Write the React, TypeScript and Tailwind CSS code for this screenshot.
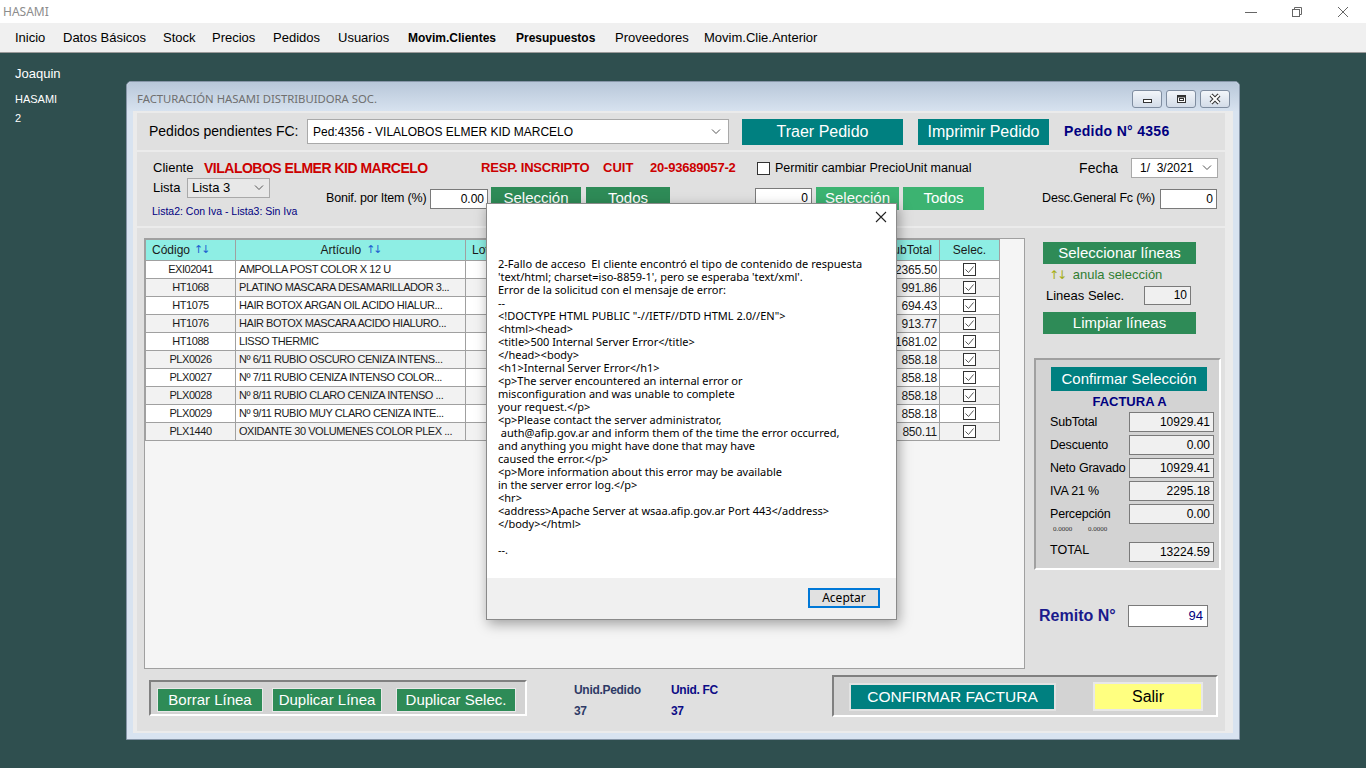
import React from 'react';

// --- data ---

const menuItems = [
  { label: 'Inicio', w: 'w-[48px]' },
  { label: 'Datos Básicos', w: 'w-[100px]' },
  { label: 'Stock', w: 'w-[49px]' },
  { label: 'Precios', w: 'w-[61px]' },
  { label: 'Pedidos', w: 'w-[65px]' },
  { label: 'Usuarios', w: 'w-[70px]' },
  { label: 'Movim.Clientes', w: 'w-[108px]', bold: true },
  { label: 'Presupuestos', w: 'w-[99px]', bold: true },
  { label: 'Proveedores', w: 'w-[89px]' },
  { label: 'Movim.Clie.Anterior', w: 'w-[120px]' },
];

const rows = [
  ['EXI02041', 'AMPOLLA POST COLOR X 12 U', '2365.50'],
  ['HT1068', 'PLATINO MASCARA DESAMARILLADOR 3...', '991.86'],
  ['HT1075', 'HAIR BOTOX ARGAN OIL ACIDO HIALUR...', '694.43'],
  ['HT1076', 'HAIR BOTOX MASCARA ACIDO HIALURO...', '913.77'],
  ['HT1088', 'LISSO THERMIC', '1681.02'],
  ['PLX0026', 'Nº 6/11 RUBIO OSCURO CENIZA INTENS...', '858.18'],
  ['PLX0027', 'Nº 7/11 RUBIO CENIZA INTENSO COLOR...', '858.18'],
  ['PLX0028', 'Nº 8/11 RUBIO CLARO CENIZA INTENSO ...', '858.18'],
  ['PLX0029', 'Nº 9/11 RUBIO MUY CLARO CENIZA INTE...', '858.18'],
  ['PLX1440', 'OXIDANTE 30 VOLUMENES COLOR PLEX ...', '850.11'],
];

const totals = [
  ['SubTotal', '10929.41'],
  ['Descuento', '0.00'],
  ['Neto Gravado', '10929.41'],
  ['IVA 21 %', '2295.18'],
  ['Percepción', '0.00'],
];

const errorLines = [
  '2-Fallo de acceso  El cliente encontró el tipo de contenido de respuesta',
  "'text/html; charset=iso-8859-1', pero se esperaba 'text/xml'.",
  'Error de la solicitud con el mensaje de error:',
  '--',
  '<!DOCTYPE HTML PUBLIC "-//IETF//DTD HTML 2.0//EN">',
  '<html><head>',
  '<title>500 Internal Server Error</title>',
  '</head><body>',
  '<h1>Internal Server Error</h1>',
  '<p>The server encountered an internal error or',
  'misconfiguration and was unable to complete',
  'your request.</p>',
  '<p>Please contact the server administrator,',
  ' auth@afip.gov.ar and inform them of the time the error occurred,',
  'and anything you might have done that may have',
  'caused the error.</p>',
  '<p>More information about this error may be available',
  'in the server error log.</p>',
  '<hr>',
  '<address>Apache Server at wsaa.afip.gov.ar Port 443</address>',
  '</body></html>',
  ' ',
  '--.',
];

// --- small pieces ---

const Chevron = () => (
  <svg width="10" height="6" viewBox="0 0 10 6" fill="none" stroke="#555" strokeWidth="1">
    <path d="M1 0.5l4 4 4-4" />
  </svg>
);

const CheckBox = ({ checked }: { checked?: boolean }) => (
  <svg width="13" height="13" viewBox="0 0 13 13">
    <rect x="0.5" y="0.5" width="12" height="12" fill="white" stroke="#333" />
    {checked && <path d="M2.5 6.5l3 3 5-6" fill="none" stroke="#555" strokeWidth="1" />}
  </svg>
);

const Arrows = () => <span className="text-[#1d5fd0] text-[11px] tracking-[-2px] font-['DejaVu_Sans',sans-serif]">↑↓</span>;

function MdiButton({ kind }: { kind: 'min' | 'max' | 'close' }) {
  return (
    <div className="w-[30px] h-[18px] rounded-[3px] border border-[#7f8da0] bg-gradient-to-b from-[#f3f6fa] to-[#d3dce8] flex items-center justify-center">
      <svg width="14" height="12" viewBox="0 0 14 12">
        {kind === 'min' && <rect x="3.5" y="6.5" width="8" height="3" fill="white" stroke="#333" />}
        {kind === 'max' && (
          <>
            <rect x="3.5" y="2.5" width="8" height="7" fill="white" stroke="#333" />
            <rect x="3.5" y="2.5" width="8" height="2" fill="#333" />
            <rect x="5.5" y="5.5" width="4" height="2" fill="white" stroke="#333" />
          </>
        )}
        {kind === 'close' && (
          <>
            <path d="M3 2l8 8M11 2l-8 8" stroke="#333" strokeWidth="4" />
            <path d="M3 2l8 8M11 2l-8 8" stroke="white" strokeWidth="2" />
          </>
        )}
      </svg>
    </div>
  );
}

const GreenBtn = ({ children, className }: { children: React.ReactNode; className: string }) => (
  <div className={`flex items-center justify-center whitespace-nowrap text-white text-[15px] ${className}`}>{children}</div>
);

// --- main window ---

function Window() {
  return (
    <div className="absolute left-[126px] top-[28px] w-[1114px] h-[659px] rounded-t-[5px] border border-[#8796a8] bg-[#d8e3f0] flex flex-col">
      {/* title */}
      <div className="h-[29px] rounded-t-[5px] bg-gradient-to-b from-[#b8c7d9] to-[#d7e2ef] flex items-start">
        <span className="pl-[10px] mt-[9px] text-[11.3px] leading-[16px] text-[#6f6f6f] font-['Noto_Sans',sans-serif]">
          FACTURACIÓN HASAMI DISTRIBUIDORA SOC.
        </span>
        <div className="ml-auto mr-[9px] mt-[8px] flex gap-[4px]">
          <MdiButton kind="min" />
          <MdiButton kind="max" />
          <MdiButton kind="close" />
        </div>
      </div>

      {/* client area */}
      <div className="mx-[6px] h-[622px] bg-[#ebebeb] px-[4px] flex flex-col">
        {/* pedidos pendientes */}
        <div className="mt-[2px] w-[1088px] h-[37px] bg-[#e0e0e0] flex items-center">
          <span className="ml-[12px] w-[158px] text-[14px] whitespace-nowrap">Pedidos pendientes FC:</span>
          <div className="w-[422px] h-[25px] bg-white border border-[#a9a9a9] flex items-center pl-[5px] pr-[7px] text-[12px]">
            <span>Ped:4356 - VILALOBOS ELMER KID MARCELO</span>
            <span className="ml-auto"><Chevron /></span>
          </div>
          <div className="ml-[13px] w-[161px] h-[26px] bg-[#008080] text-white text-[16px] flex items-center justify-center">Traer Pedido</div>
          <div className="ml-[15px] w-[131px] h-[26px] bg-[#008080] text-white text-[16px] flex items-center justify-center">Imprimir Pedido</div>
          <span className="ml-[15px] text-[14px] font-bold text-[#000080] tracking-[0.3px]">Pedido N° 4356</span>
        </div>

        {/* cliente */}
        <div className="mt-[2px] w-[1088px] h-[74px] bg-[#e0e0e0] flex pt-[6px]">
          <div className="ml-[16px] w-[602px] flex flex-col">
            <div className="h-[20px] flex items-center whitespace-nowrap">
              <span className="w-[51px] text-[13px]">Cliente</span>
              <span className="w-[277px] text-[14px] font-bold text-[#cc0000] tracking-[-0.5px]">VILALOBOS ELMER KID MARCELO</span>
              <span className="w-[122px] text-[13px] font-bold text-[#cc0000] tracking-[-0.2px]">RESP. INSCRIPTO</span>
              <span className="w-[47px] text-[13px] font-bold text-[#cc0000]">CUIT</span>
              <span className="text-[13px] font-bold text-[#cc0000] tracking-[-0.2px]">20-93689057-2</span>
            </div>
            <div className="flex">
              <div className="w-[173px] flex flex-col">
                <div className="h-[20px] flex items-center">
                  <span className="w-[34px] text-[13px]">Lista</span>
                  <div className="w-[83px] h-[20px] bg-[#e8e8e8] border border-[#a9a9a9] flex items-center pl-[4px] pr-[5px] text-[13px]">
                    <span>Lista 3</span>
                    <span className="ml-auto"><Chevron /></span>
                  </div>
                </div>
                <div className="mt-[6px] -ml-[1px] text-[10.5px] leading-[14px] text-[#000080] whitespace-nowrap">Lista2: Con Iva - Lista3: Sin Iva</div>
              </div>
              <div className="mt-[9px] h-[23px] flex items-center">
                <span className="w-[104px] text-[12.5px] whitespace-nowrap tracking-[-0.2px]">Bonif. por Item (%)</span>
                <div className="w-[58px] h-[20px] bg-white border border-[#7a7a7a] text-[12px] text-right pr-[3px] leading-[18px]">0.00</div>
                <GreenBtn className="ml-[3px] w-[90px] h-[23px] bg-[#2e8b57]">Selección</GreenBtn>
                <GreenBtn className="ml-[5px] w-[84px] h-[23px] bg-[#2e8b57]">Todos</GreenBtn>
              </div>
            </div>
          </div>

          <div className="w-[270px] flex flex-col">
            <div className="h-[20px] flex items-center">
              <span className="ml-[2px]"><CheckBox /></span>
              <span className="ml-[5px] text-[12.5px] whitespace-nowrap">Permitir cambiar PrecioUnit manual</span>
            </div>
            <div className="mt-[9px] h-[23px] flex items-center">
              <div className="w-[57px] h-[21px] bg-white border border-[#7a7a7a] text-[12px] text-right pr-[3px] leading-[19px]">0</div>
              <GreenBtn className="ml-[4px] w-[83px] h-[23px] bg-[#3cb371]">Selección</GreenBtn>
              <GreenBtn className="ml-[4px] w-[81px] h-[23px] bg-[#3cb371]">Todos</GreenBtn>
            </div>
          </div>

          <div className="flex-1 flex flex-col items-end pr-[7px]">
            <div className="h-[20px] flex items-center">
              <span className="mr-[13px] text-[14px]">Fecha</span>
              <div className="w-[87px] h-[20px] bg-white border border-[#a9a9a9] flex items-center pl-[8px] pr-[5px] text-[12px]">
                <span className="whitespace-pre">1/  3/2021</span>
                <span className="ml-auto"><Chevron /></span>
              </div>
            </div>
            <div className="mt-[9px] h-[23px] flex items-center pr-[1px]">
              <span className="mr-[5px] text-[12.5px] whitespace-nowrap tracking-[-0.2px]">Desc.General Fc (%)</span>
              <div className="w-[57px] h-[20px] bg-white border border-[#7a7a7a] text-[12px] text-right pr-[3px] leading-[18px]">0</div>
            </div>
          </div>
        </div>

        {/* detalle */}
        <div className="mt-[2px] w-[1088px] h-[503px] bg-[#e0e0e0] flex flex-col">
          <div className="h-[443px] flex">
            {/* grid */}
            <div className="ml-[7px] mt-[10px] w-[881px] h-[431px] border border-[#a0a0a0] bg-[#f5f5f5]">
              <div className="w-[855px] border-l border-t border-[#a0a0a0] text-[11px] text-[#1a1a1a] tracking-[-0.45px]">
                <div className="h-[21px] flex bg-[#8eeee4] text-[12px] tracking-normal">
                  <div className="w-[90px] border-r border-b border-[#a0a0a0] flex items-center pl-[6px] gap-[4px]">Código <Arrows /></div>
                  <div className="w-[230px] border-r border-b border-[#a0a0a0] flex items-center justify-center gap-[5px]">Artículo <Arrows /></div>
                  <div className="w-[90px] border-r border-b border-[#a0a0a0] flex items-center pl-[6px]">Lote</div>
                  <div className="w-[60px] border-r border-b border-[#a0a0a0] flex items-center justify-center">Cant.</div>
                  <div className="w-[90px] border-r border-b border-[#a0a0a0] flex items-center justify-center">PrecioUnit</div>
                  <div className="w-[60px] border-r border-b border-[#a0a0a0] flex items-center justify-center">Bonif.</div>
                  <div className="w-[114px] border-r border-b border-[#a0a0a0] flex items-center justify-center">Importe</div>
                  <div className="w-[60px] border-r border-b border-[#a0a0a0] flex items-center justify-end pr-[7px]">SubTotal</div>
                  <div className="w-[60px] border-r border-b border-[#a0a0a0] flex items-center justify-center">Selec.</div>
                </div>
                {rows.map((r, i) => (
                  <div key={r[0]} className={`h-[18px] flex ${i % 2 ? 'bg-[#f2f2f2]' : 'bg-white'}`}>
                    <div className="w-[90px] border-r border-b border-[#a0a0a0] flex items-center justify-center">{r[0]}</div>
                    <div className="w-[230px] border-r border-b border-[#a0a0a0] flex items-center pl-[3px] whitespace-nowrap overflow-hidden">{r[1]}</div>
                    <div className="w-[90px] border-r border-b border-[#a0a0a0]" />
                    <div className="w-[60px] border-r border-b border-[#a0a0a0]" />
                    <div className="w-[90px] border-r border-b border-[#a0a0a0]" />
                    <div className="w-[60px] border-r border-b border-[#a0a0a0]" />
                    <div className="w-[114px] border-r border-b border-[#a0a0a0]" />
                    <div className="w-[60px] border-r border-b border-[#a0a0a0] flex items-center justify-end pr-[2px] text-[12px] tracking-[-0.2px]">{r[2]}</div>
                    <div className="w-[60px] border-r border-b border-[#a0a0a0] flex items-center justify-center"><CheckBox checked /></div>
                  </div>
                ))}
              </div>
            </div>

            {/* right column */}
            <div className="ml-[5px] w-[195px] flex flex-col">
              <GreenBtn className="ml-[13px] mt-[14px] w-[153px] h-[22px] bg-[#2e8b57]">Seleccionar líneas</GreenBtn>
              <div className="ml-[19px] mt-[3px] text-[13px] leading-[16px] text-[#2f7d32] whitespace-nowrap">
                <span className="text-[#a3ad10] text-[12px] tracking-[-2px] font-['DejaVu_Sans',sans-serif] mr-[4px]">↑↓</span> anula selección
              </div>
              <div className="ml-[16px] mt-[3px] h-[19px] flex items-center">
                <span className="w-[98px] text-[13px] whitespace-nowrap">Lineas Selec.</span>
                <div className="w-[47px] h-[19px] bg-[#f0f0f0] border border-[#7a7a7a] text-[12px] text-right pr-[3px] leading-[17px]">10</div>
              </div>
              <GreenBtn className="ml-[13px] mt-[7px] w-[153px] h-[22px] bg-[#2e8b57]">Limpiar líneas</GreenBtn>

              <div className="ml-[4px] mt-[24px] w-[187px] h-[212px] bg-[#d3d3d3] border-2 border-t-[#a0a0a0] border-l-[#a0a0a0] border-b-white border-r-white flex flex-col">
                <div className="ml-[15px] mt-[7px] w-[156px] h-[24px] bg-[#008080] text-white text-[15px] flex items-center justify-center whitespace-nowrap">Confirmar Selección</div>
                <div className="mt-[4px] h-[14px] leading-[14px] text-center text-[13px] font-bold text-[#000080] pl-[4px]">FACTURA A</div>
                {totals.map(([l, v]) => (
                  <div key={l} className="mt-[3px] h-[20px] flex items-center pl-[14px]">
                    <span className="w-[79px] text-[12.5px] whitespace-nowrap tracking-[-0.2px]">{l}</span>
                    <div className="w-[85px] h-[20px] bg-[#f0f0f0] border border-[#7a7a7a] text-[12px] text-right pr-[3px] leading-[18px]">{v}</div>
                  </div>
                ))}
                <div className="h-[10px] flex items-center pl-[17px] text-[7px] text-[#333] font-['Liberation_Serif',serif]">
                  <span className="w-[35px]">0.0000</span>
                  <span>0.0000</span>
                </div>
                <div className="mt-[8px] h-[20px] flex items-center pl-[14px]">
                  <span className="w-[79px] text-[12.5px] -mt-[4px]">TOTAL</span>
                  <div className="w-[85px] h-[20px] bg-[#f0f0f0] border border-[#7a7a7a] text-[12px] text-right pr-[3px] leading-[18px]">13224.59</div>
                </div>
              </div>

              <div className="ml-[9px] mt-[35px] h-[22px] flex items-center">
                <span className="w-[89px] text-[16px] font-bold text-[#1a1a8c] whitespace-nowrap">Remito N°</span>
                <div className="w-[80px] h-[22px] bg-white border border-[#7a7a7a] text-[13px] text-right pr-[4px] leading-[20px] text-[#000080]">94</div>
              </div>
            </div>
          </div>

          {/* bottom */}
          <div className="h-[60px] flex items-start">
            <div className="ml-[12px] mt-[9px] w-[378px] h-[36px] bg-[#d3d3d3] border-2 border-t-[#808080] border-l-[#808080] border-b-white border-r-white flex items-start pl-[6px] pt-[6px]">
              <GreenBtn className="w-[106px] h-[24px] bg-[#2e8b57] border border-[#e8e8e8]">Borrar Línea</GreenBtn>
              <GreenBtn className="ml-[9px] w-[110px] h-[24px] bg-[#2e8b57] border border-[#e8e8e8]">Duplicar Línea</GreenBtn>
              <GreenBtn className="ml-[14px] w-[120px] h-[24px] bg-[#2e8b57] border border-[#e8e8e8]">Duplicar Selec.</GreenBtn>
            </div>
            <div className="ml-[47px] mt-[12px] w-[97px] flex flex-col text-[12px] font-bold text-[#2e3a66] leading-[14px] tracking-[-0.3px]">
              <span>Unid.Pedido</span>
              <span className="mt-[7px]">37</span>
            </div>
            <div className="mt-[12px] w-[161px] flex flex-col text-[12px] font-bold text-[#0c0c86] leading-[14px] tracking-[-0.3px]">
              <span>Unid. FC</span>
              <span className="mt-[7px]">37</span>
            </div>
            <div className="mt-[4px] w-[386px] h-[42px] bg-[#d3d3d3] border-2 border-t-[#808080] border-l-[#808080] border-b-white border-r-white flex items-start">
              <div className="ml-[15px] mt-[6px] w-[207px] h-[28px] bg-[#008080] border-2 border-[#e2e2e2] text-white text-[15.5px] flex items-center justify-center whitespace-nowrap">CONFIRMAR FACTURA</div>
              <div className="ml-[37px] mt-[5px] w-[110px] h-[29px] bg-[#ffff80] border-2 border-[#e8e8e8] text-[16px] flex items-center justify-center">Salir</div>
            </div>
          </div>
        </div>
      </div>
    </div>
  );
}

function ErrorDialog() {
  return (
    <div className="absolute left-[486px] top-[203px] w-[411px] h-[417px] bg-white border border-[#8a8a8a] shadow-[2px_4px_12px_rgba(0,0,0,0.35)] flex flex-col">
      <div className="h-[53px] flex justify-end pt-[7px] pr-[9px]">
        <svg width="12" height="12" viewBox="0 0 12 12" stroke="#222" strokeWidth="1.1">
          <path d="M1 1l10 10M11 1L1 11" />
        </svg>
      </div>
      <div className="flex-1 pl-[11px] font-['Noto_Sans',sans-serif] text-[11px] leading-[13px] text-black">
        {errorLines.map((l, i) => (
          <div key={i} className="whitespace-pre h-[13px]">{l}</div>
        ))}
      </div>
      <div className="h-[41px] bg-[#f0f0f0] flex justify-end pt-[10px] pr-[16px]">
        <div className="w-[72px] h-[20px] border-2 border-[#0078d7] bg-[#e1e1e1] text-[12px] font-['Noto_Sans',sans-serif] flex items-center justify-center">Aceptar</div>
      </div>
    </div>
  );
}

export default function App() {
  return (
    <div className="relative w-[1366px] h-[768px] overflow-hidden flex flex-col font-['Liberation_Sans',Arial,sans-serif] text-black">
      {/* app title bar */}
      <div className="h-[23px] bg-white flex items-center">
        <span className="pl-[3px] text-[12px] text-[#8c8c8c] font-['Noto_Sans',sans-serif]">HASAMI</span>
        <div className="ml-auto flex h-full">
          <div className="w-[46px] flex items-center justify-center">
            <svg width="12" height="12" viewBox="0 0 12 12" stroke="#666"><path d="M0 6.5h12" /></svg>
          </div>
          <div className="w-[46px] flex items-center justify-center">
            <svg width="12" height="12" viewBox="0 0 12 12" stroke="#666" fill="none">
              <rect x="1.5" y="3.5" width="7" height="7" />
              <path d="M3.5 3.5v-2h7v7h-2" />
            </svg>
          </div>
          <div className="w-[46px] flex items-center justify-center">
            <svg width="12" height="12" viewBox="0 0 12 12" stroke="#666"><path d="M1 1l10 10M11 1L1 11" /></svg>
          </div>
        </div>
      </div>

      {/* menu */}
      <div className="h-[30px] bg-[#f0f0f0] border-b border-[#9a9a9a] flex items-center pl-[15px] text-[13px]">
        {menuItems.map((m) => (
          <span key={m.label} className={`${m.w} ${m.bold ? 'font-bold text-[12px]' : ''} whitespace-nowrap`}>{m.label}</span>
        ))}
      </div>

      {/* desktop */}
      <div className="relative flex-1 bg-[#2f4f4f]">
        <div className="pl-[15px] pt-[13px] text-white flex flex-col">
          <span className="text-[13px] leading-[16px]">Joaquin</span>
          <span className="mt-[11px] text-[11px] leading-[13px]">HASAMI</span>
          <span className="mt-[6px] text-[11px] leading-[13px]">2</span>
        </div>
        <Window />
      </div>

      <ErrorDialog />
    </div>
  );
}
